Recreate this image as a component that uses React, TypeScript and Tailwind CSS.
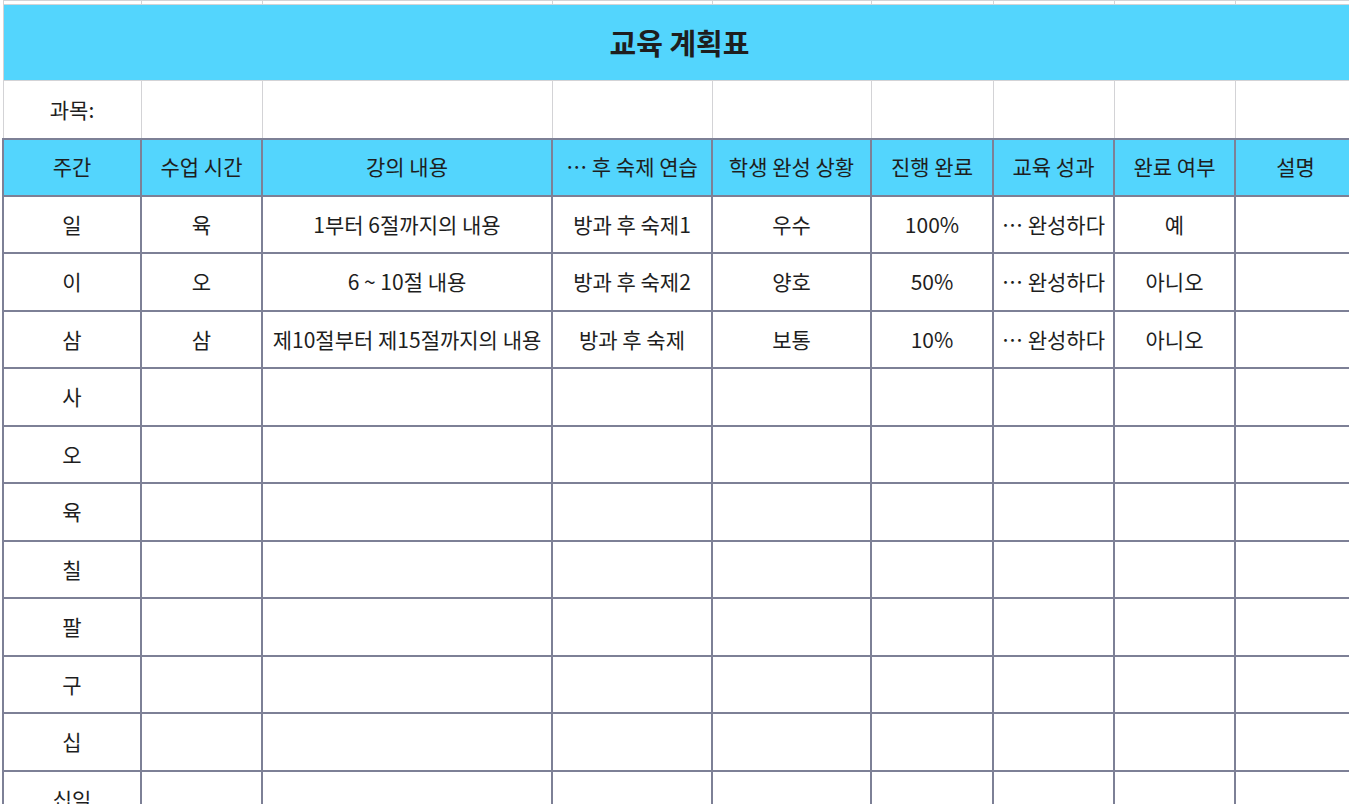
import React from "react";

const widths = [138, 121, 290, 160, 159, 122, 121, 121, 121];

const headers = [
  "주간",
  "수업 시간",
  "강의 내용",
  "… 후 숙제 연습",
  "학생 완성 상황",
  "진행 완료",
  "교육 성과",
  "완료 여부",
  "설명",
];

const rows: string[][] = [
  ["일", "육", "1부터 6절까지의 내용", "방과 후 숙제1", "우수", "100%", "… 완성하다", "예", ""],
  ["이", "오", "6 ~ 10절 내용", "방과 후 숙제2", "양호", "50%", "… 완성하다", "아니오", ""],
  ["삼", "삼", "제10절부터 제15절까지의 내용", "방과 후 숙제", "보통", "10%", "… 완성하다", "아니오", ""],
  ["사"],
  ["오"],
  ["육"],
  ["칠"],
  ["팔"],
  ["구"],
  ["십"],
  ["십일"],
  ["십이"],
];

const light = "border border-[#d3d3d6]";
const dark = "border-2 border-[#7d8096]";

export default function App() {
  return (
    <div
      className="h-screen overflow-hidden bg-white pl-[2px] text-[#1e1e1e]"
      style={{ fontFamily: '"Noto Sans CJK KR", "Noto Sans", sans-serif' }}
    >
      <table className="table-fixed border-collapse w-[1353px]">
        <colgroup>
          {widths.map((w, i) => (
            <col key={i} style={{ width: w }} />
          ))}
        </colgroup>
        <tbody>
          {/* sliver of the row above, scrolled off */}
          <tr className="h-[4px]">
            {widths.map((_, i) => (
              <td key={i} className={`${light} p-0`} />
            ))}
          </tr>
          <tr className="h-[76px]">
            <td
              colSpan={9}
              className={`${light} bg-[#53d5fd] text-center text-[29px] font-bold p-0`}
            >
              교육 계획표
            </td>
          </tr>
          <tr className="h-[58px]">
            <td className={`${light} text-center text-[21px] p-0`}>과목:</td>
            {widths.slice(1).map((_, i) => (
              <td key={i} className={`${light} p-0`} />
            ))}
          </tr>
          <tr className="h-[57px]">
            {headers.map((h, i) => (
              <td
                key={i}
                className={`${dark} bg-[#53d5fd] text-center text-[21px] p-0 whitespace-nowrap overflow-hidden`}
              >
                {h}
              </td>
            ))}
          </tr>
          {rows.map((r, ri) => (
            <tr key={ri} className="h-[57.5px]">
              {widths.map((_, ci) => (
                <td
                  key={ci}
                  className={`${dark} text-center text-[21px] p-0 whitespace-nowrap overflow-hidden`}
                >
                  {r[ci] ?? ""}
                </td>
              ))}
            </tr>
          ))}
        </tbody>
      </table>
    </div>
  );
}
